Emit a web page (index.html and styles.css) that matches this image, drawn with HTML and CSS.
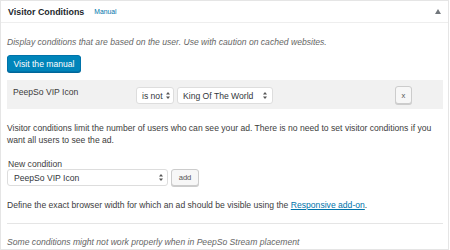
FILE: index.html
```html
<!DOCTYPE html>
<html lang="en">
<head>
  <meta charset="UTF-8">
  <title>Visitor Conditions</title>
  <link rel="stylesheet" href="styles.css">
</head>
<body>
  <div class="postbox">
    <div class="hndle">
      <h2>Visitor Conditions</h2>
      <a class="manual-link" href="#">Manual</a>
      <span class="toggle">
        <svg width="6" height="5" viewBox="0 0 6 5"><polygon points="0,5 3,0 6,5" fill="#72777c"/></svg>
      </span>
    </div>

    <div class="inside">
      <p class="description">Display conditions that are based on the user. Use with caution on cached websites.</p>

      <button class="button-primary">Visit the manual</button>

      <div class="condition-row">
        <span class="condition-name">PeepSo VIP Icon</span>
        <div class="fake-select select-operator">
          <span>is not</span>
          <svg class="arrows" width="4" height="7" viewBox="0 0 4 7"><polygon points="0,2.6 2,0 4,2.6" /><polygon points="0,4.4 2,7 4,4.4" /></svg>
        </div>
        <div class="fake-select select-value">
          <span>King Of The World</span>
          <svg class="arrows" width="4" height="7" viewBox="0 0 4 7"><polygon points="0,2.6 2,0 4,2.6" /><polygon points="0,4.4 2,7 4,4.4" /></svg>
        </div>
        <button class="button remove">x</button>
      </div>

      <p class="limit-text">Visitor conditions limit the number of users who can see your ad. There is no need to set visitor conditions if you want all users to see the ad.</p>

      <label class="new-label">New condition</label>
      <div class="new-condition">
        <div class="fake-select select-new">
          <span>PeepSo VIP Icon</span>
          <svg class="arrows" width="4" height="7" viewBox="0 0 4 7"><polygon points="0,2.6 2,0 4,2.6" /><polygon points="0,4.4 2,7 4,4.4" /></svg>
        </div>
        <button class="button add">add</button>
      </div>

      <p class="define-text">Define the exact browser width for which an ad should be visible using the <a href="#">Responsive add-on</a>.</p>

      <hr>

      <p class="note">Some conditions might not work properly when in PeepSo Stream placement</p>
    </div>
  </div>
</body>
</html>
```

FILE: styles.css
```css
body {
  margin: 0;
  font-family: 'Liberation Sans', Arial, sans-serif;
  font-size: 8.6px;
  color: #3c3c3c;
  background: #fff;
}

.postbox {
  width: 447px;
  height: 248px;
  border: 1px solid #e5e5e5;
  background: #fff;
  overflow: hidden;
}

.hndle {
  display: flex;
  align-items: center;
  height: 21px;
  padding: 0 7px;
  border-bottom: 1px solid #eee;
}

.hndle h2 {
  margin: 0;
  font-size: 8.9px;
  font-weight: 700;
  color: #23282d;
}

.manual-link {
  margin-left: 10px;
  font-size: 6.8px;
  color: #0073aa;
  text-decoration: none;
}

.toggle {
  margin-left: auto;
  margin-right: 0;
  display: flex;
}

.inside {
  padding: 0 5px 0 6px;
}

p {
  margin: 0;
  line-height: 12px;
}

.description {
  margin-top: 13px;
  font-style: italic;
  color: #666;
}

.button-primary {
  display: block;
  margin-top: 7px;
  height: 17px;
  width: 74px;
  padding: 0;
  font-family: inherit;
  font-size: 8.6px;
  color: #fff;
  background: #0085ba;
  border: 1px solid #0073aa;
  border-radius: 3px;
  box-shadow: 0 1px 0 #006799;
}

.condition-row {
  display: flex;
  align-items: flex-start;
  margin-top: 8px;
  height: 29px;
  padding: 0 31px 0 6px;
  background: #f1f1f1;
}

.condition-name {
  width: 123px;
  margin-top: 6px;
  line-height: 12px;
}

.fake-select {
  display: flex;
  align-items: center;
  justify-content: space-between;
  height: 17px;
  margin-top: 7px;
  padding: 0 4px 0 5px;
  box-sizing: border-box;
  background: #fff;
  border: 1px solid #ddd;
  border-radius: 3px;
  white-space: nowrap;
  color: #32373c;
}

.fake-select .arrows {
  fill: #555;
}

.select-operator {
  width: 38px;
  padding-right: 3px;
}

.select-value {
  width: 96px;
  margin-left: 3px;
  padding-right: 5px;
}

.button {
  height: 18px;
  padding: 0;
  font-family: inherit;
  font-size: 7.6px;
  color: #555;
  background: #f7f7f7;
  border: 1px solid #ccc;
  border-radius: 3px;
  box-shadow: 0 1px 0 #ccc;
}

.remove {
  margin-left: auto;
  margin-top: 6px;
  width: 17px;
}

.limit-text {
  margin-top: 13px;
}

.new-label {
  display: block;
  margin-top: 13px;
  margin-left: 1px;
  line-height: 10px;
}

.new-condition {
  display: flex;
  align-items: flex-start;
}

.select-new {
  width: 161px;
  margin-top: 0;
  padding-left: 6px;
}

.add {
  margin-left: 3px;
  width: 28px;
  height: 17px;
}

.define-text {
  margin-top: 13px;
}

.define-text a {
  color: #0073aa;
}

hr {
  margin: 12px 0 0;
  border: 0;
  border-top: 1px solid #e5e5e5;
}

.note {
  margin-top: 12px;
  font-style: italic;
  color: #666;
}
```
